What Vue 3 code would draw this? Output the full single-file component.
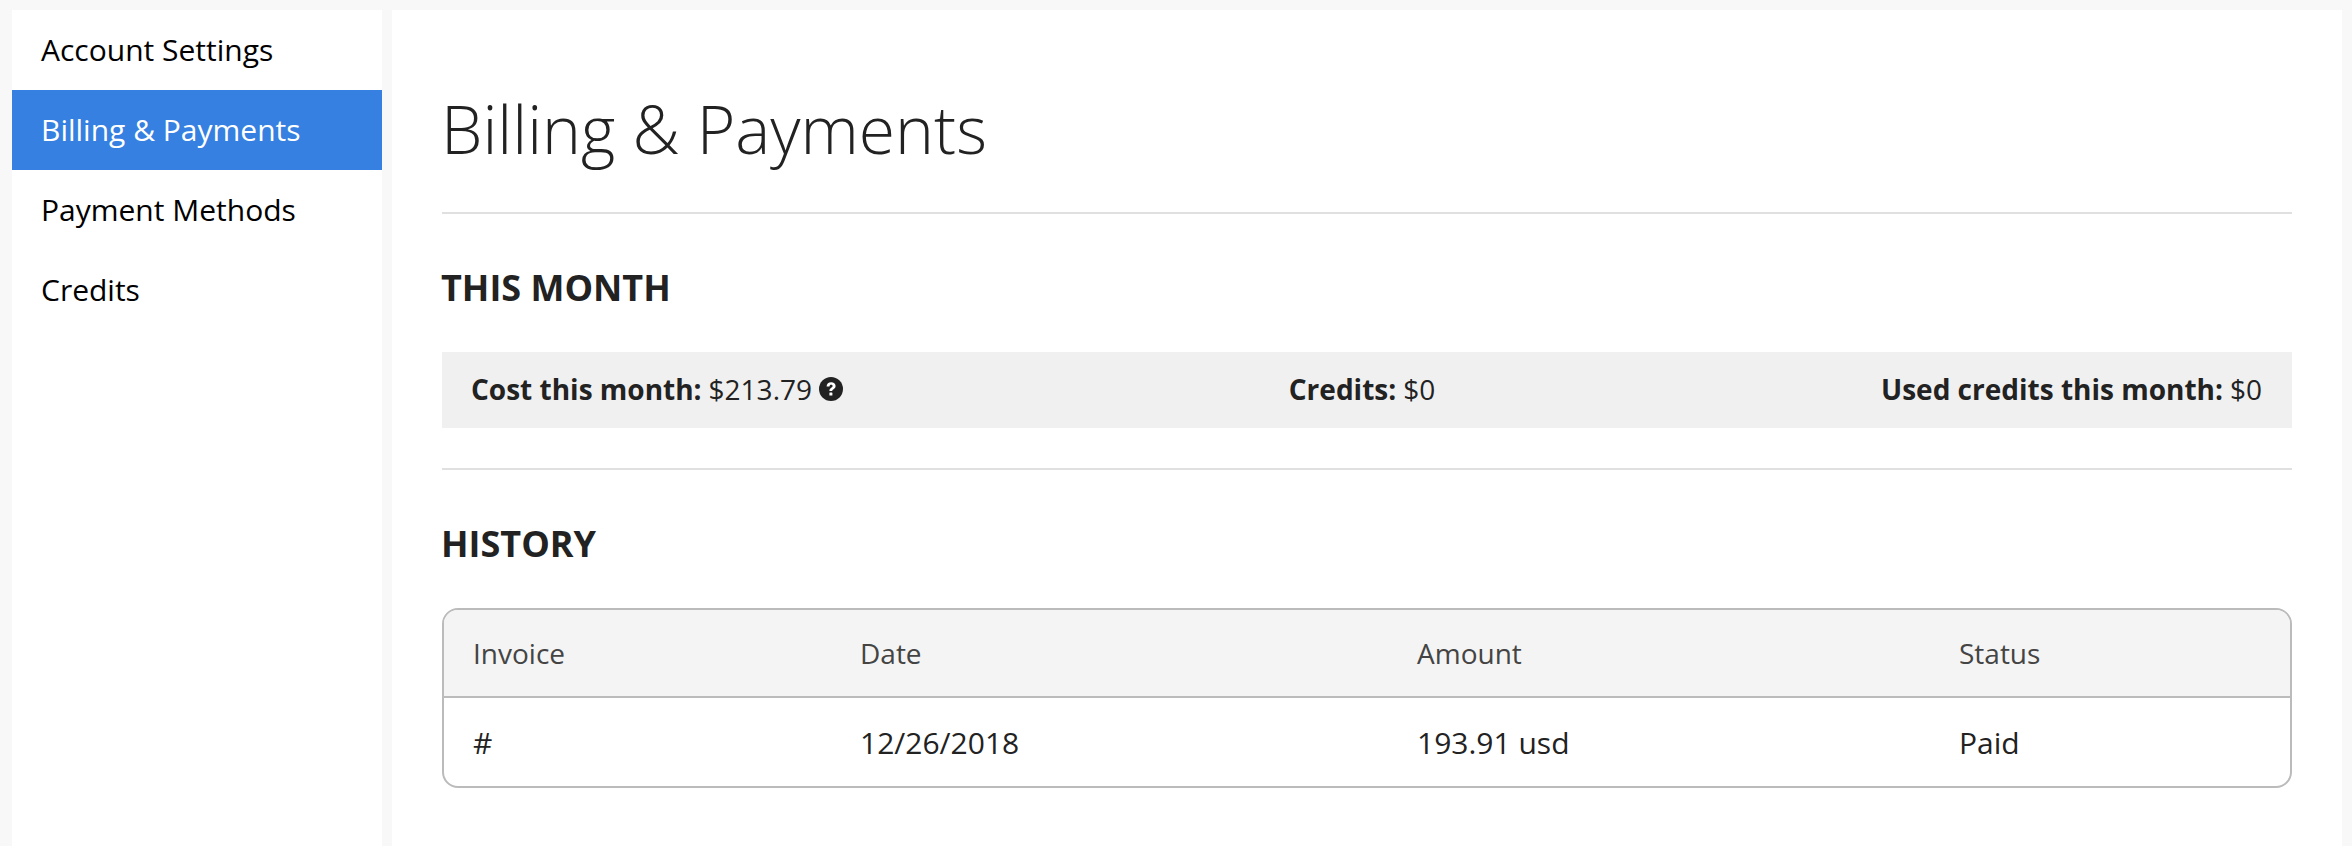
<script setup>
const nav = ['Account Settings', 'Billing & Payments', 'Payment Methods', 'Credits']
</script>

<template>
  <div class="page">
    <aside class="side">
      <a v-for="n in nav" :key="n" class="item" :class="{ on: n === 'Billing & Payments' }">{{ n }}</a>
    </aside>
    <main class="main">
      <h1>Billing &amp; Payments</h1>
      <hr class="rule" />
      <h2 class="first">THIS MONTH</h2>
      <div class="bar">
        <span class="cell"><b>Cost this month:</b> $213.79
          <svg class="help" viewBox="0 0 24 24" width="24" height="24">
            <circle cx="12" cy="12" r="12" fill="#222" />
            <path d="M7.600 9.400c0-2.600 2-4.200 4.600-4.200 2.500 0 4.400 1.500 4.400 3.800 0 1.800-1.100 2.700-2.300 3.400-.8.500-1.100.9-1.100 1.700h-2.800c0-1.700.6-2.600 1.800-3.400 1-.6 1.400-1 1.400-1.600 0-.8-.6-1.300-1.500-1.300-1 0-1.500.6-1.600 1.600z" fill="#fff" />
            <rect x="10.400" y="15.600" width="3" height="3" rx=".4" fill="#fff" />
          </svg>
        </span>
        <span class="cell"><b>Credits:</b> $0</span>
        <span class="cell"><b>Used credits this month:</b> $0</span>
      </div>
      <hr class="rule second" />
      <h2>HISTORY</h2>
      <div class="table">
        <div class="row head">
          <span>Invoice</span><span>Date</span><span>Amount</span><span>Status</span>
        </div>
        <div class="row">
          <span>#</span><span>12/26/2018</span><span>193.91 usd</span><span>Paid</span>
        </div>
      </div>
    </main>
  </div>
</template>

<style scoped>
.page {
  display: flex;
  gap: 10px;
  box-sizing: border-box;
  height: 846px;
  padding: 10px 10px 0 12px;
  background: #f8f8f8;
  font-family: "Open Sans", sans-serif;
  color: #222;
  overflow: hidden;
}
.side {
  width: 370px;
  flex: none;
  background: #fff;
}
.item {
  display: block;
  height: 80px;
  line-height: 80px;
  padding-left: 29px;
  font-size: 30px;
  color: #000;
}
.item.on {
  background: #3580e0;
  color: #fff;
}
.main {
  flex: 1;
  background: #fff;
  padding: 0 50px;
}
h1 {
  margin: 0;
  padding-top: 76px;
  height: 84px;
  font-size: 66px;
  font-weight: 300;
  line-height: 84px;
  color: #222;
  text-indent: -1px;
}
.rule {
  margin: 42px 0 0;
  border: 0;
  height: 2px;
  background: #e0e0e0;
}
h2 {
  margin: 50px 0 0;
  font-size: 36px;
  font-weight: 700;
  line-height: 48px;
  color: #222;
  text-indent: -1px;
}
.bar {
  display: flex;
  justify-content: space-between;
  align-items: center;
  box-sizing: border-box;
  height: 76px;
  margin-top: 40px;
  padding: 0 30px 2px 29px;
  background: #f0f0f0;
  font-size: 28px;
}
.cell {
  display: flex;
  align-items: center;
  gap: 7px;
}
.cell b {
  font-weight: 700;
}
.help {
  flex: none;
}
.second {
  margin-top: 40px;
}
.table {
  margin-top: 40px;
  border: 2px solid #bbb;
  border-radius: 16px;
  overflow: hidden;
}
.row {
  display: grid;
  grid-template-columns: 387px 557px 542px 1fr;
  align-items: center;
  height: 88px;
  padding-left: 29px;
  font-size: 30px;
  color: #222;
}
.head {
  height: 86px;
  background: #f4f4f4;
  border-bottom: 2px solid #bbb;
  font-size: 28px;
  color: #444;
}
</style>
